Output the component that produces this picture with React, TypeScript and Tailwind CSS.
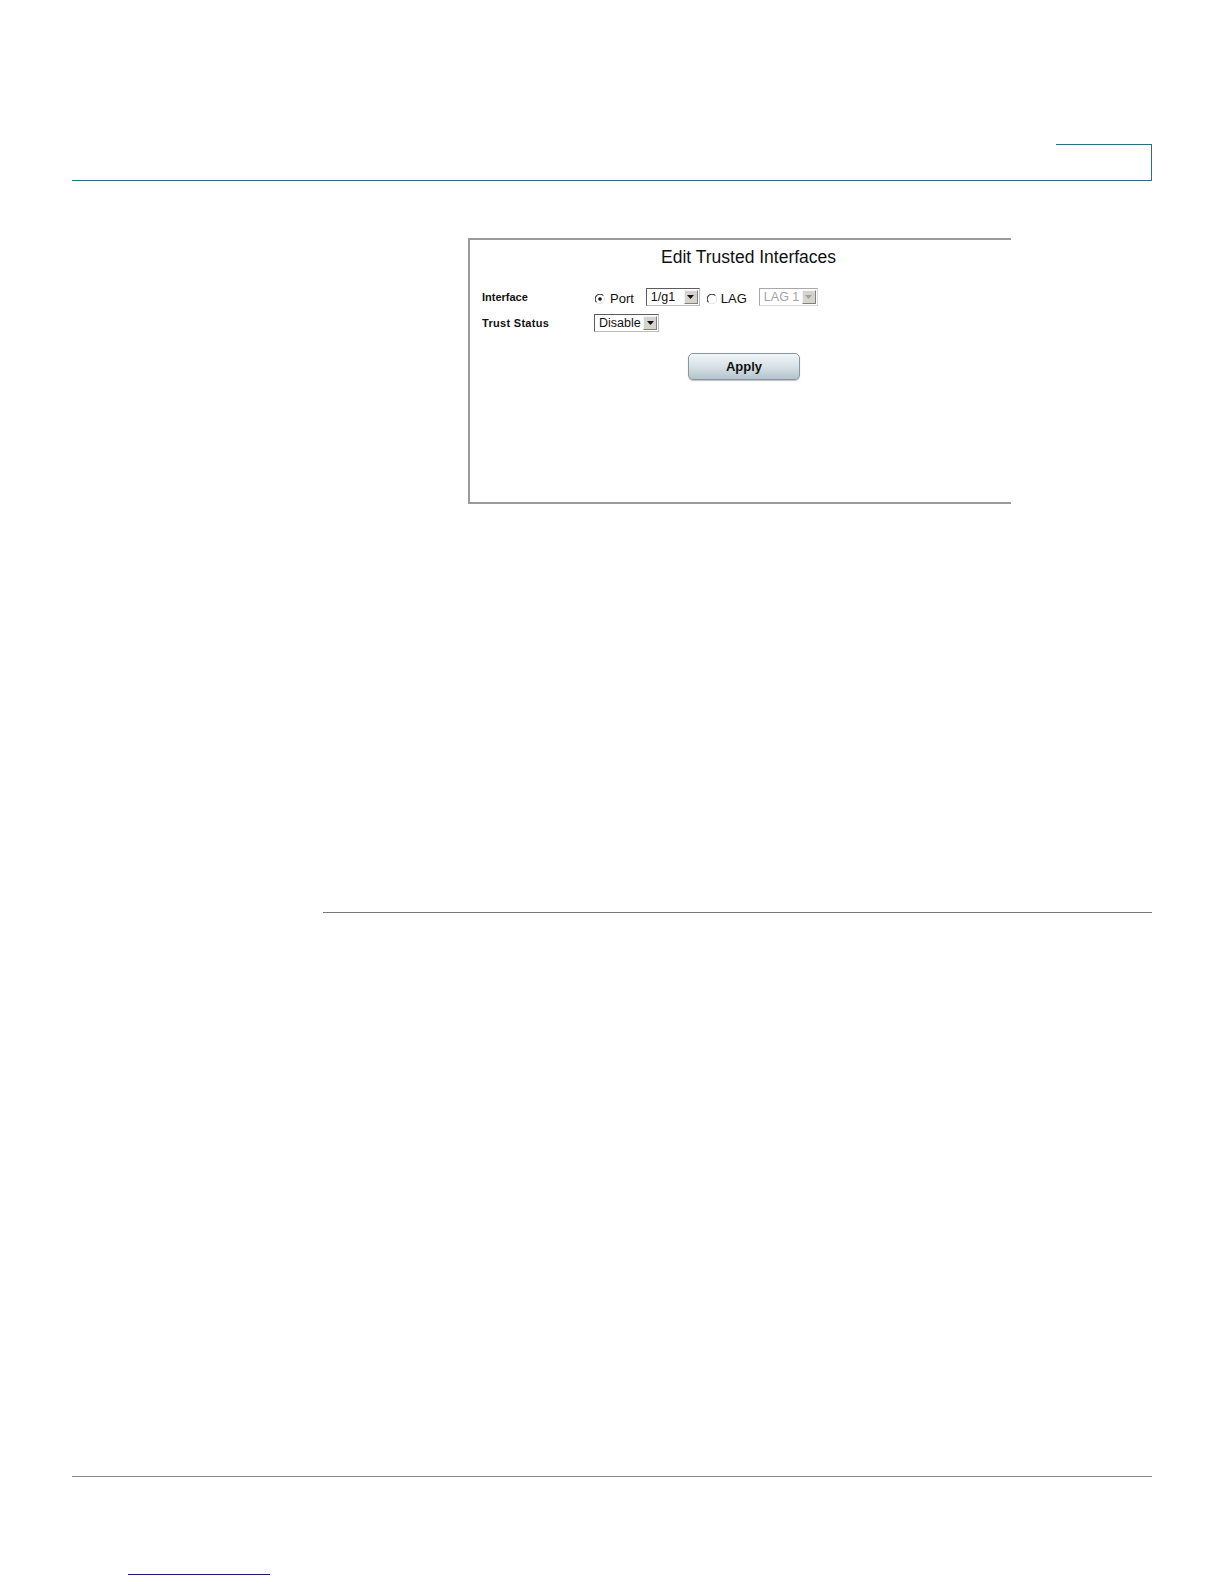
import React from "react";

const Radio: React.FC<{ checked?: boolean }> = ({ checked }) => (
  <svg width="10" height="10" viewBox="0 0 10 10" className="mt-[3px] shrink-0">
    <path d="M1.6 8.4 A4.6 4.6 0 0 1 8.4 1.6" fill="none" stroke="#3c3c3c" strokeWidth="1.1" />
    <path d="M8.4 1.6 A4.6 4.6 0 0 1 1.6 8.4" fill="none" stroke="#e2e2e2" strokeWidth="1" />
    {checked && <circle cx="5" cy="5" r="1.8" fill="#111" />}
  </svg>
);

interface SelectProps {
  value: string;
  width: string;
  disabled?: boolean;
}

const Select: React.FC<SelectProps> = ({ value, width, disabled }) => (
  <div
    className={`flex h-[18px] bg-white border ${width} ${
      disabled
        ? "border-t-[#a8a8a8] border-l-[#a8a8a8] border-b-[#d8d8d8] border-r-[#d8d8d8]"
        : "border-t-[#5c5c5c] border-l-[#5c5c5c] border-b-[#bdbdbd] border-r-[#bdbdbd]"
    }`}
  >
    <span
      className={`flex-1 pl-[4px] text-[12.5px] leading-[16px] ${
        disabled ? "text-[#a3a3a3]" : "text-[#111]"
      }`}
    >
      {value}
    </span>
    <div className="m-px w-[14px] flex items-center justify-center bg-[#d6d3cc] border border-t-[#f4f4f4] border-l-[#f4f4f4] border-b-[#808080] border-r-[#808080]">
      <svg width="7" height="4" viewBox="0 0 7 4">
        <path d="M0 0 H7 L3.5 4 Z" fill={disabled ? "#a0a0a0" : "#111"} />
      </svg>
    </div>
  </div>
);

const EditTrustedInterfaces: React.FC = () => (
  <div className="mt-[57px] ml-[468px] w-[543px] h-[266px] border-l-2 border-t-2 border-b-2 border-[#9b9b9b] pt-[7px]">
    <h1 className="pl-[191px] h-[20px] text-[17.5px] leading-[20px] text-[#111] font-normal">
      Edit Trusted Interfaces
    </h1>

    {/* Interface row */}
    <div className="mt-[21px] pl-[12px] flex items-center h-[18px]">
      <span className="w-[112px] text-[11px] font-bold text-[#111]">Interface</span>
      <div className="flex items-center">
        <div className="ml-[1px]">
          <Radio checked />
        </div>
        <span className="ml-[5px] text-[13px] leading-[16px] mt-[3px] text-[#111]">Port</span>
        <div className="ml-[12px]">
          <Select value="1/g1" width="w-[54px]" />
        </div>
        <div className="ml-[7px]">
          <Radio />
        </div>
        <span className="ml-[4px] text-[13px] leading-[16px] mt-[3px] text-[#111]">LAG</span>
        <div className="ml-[12px]">
          <Select value="LAG 1" width="w-[59px]" disabled />
        </div>
      </div>
    </div>

    {/* Trust status row */}
    <div className="mt-[8px] pl-[12px] flex items-center h-[18px]">
      <span className="w-[112px] text-[11px] font-bold tracking-[0.3px] text-[#111]">
        Trust Status
      </span>
      <Select value="Disable" width="w-[65px]" />
    </div>

    <div className="mt-[21px] ml-[218px]">
      <button className="w-[112px] h-[27px] rounded-[5px] border border-[#8597a2] bg-linear-to-b from-[#f1f5f7] via-[#d8e2e7] to-[#b3c3cc] shadow-[0_1px_1px_rgba(0,0,0,0.25)] text-[13px] font-bold text-[#111]">
        Apply
      </button>
    </div>
  </div>
);

export default function App() {
  return (
    <div className="w-[1224px] h-[1584px] bg-white overflow-hidden font-['Liberation_Sans',Arial,sans-serif]">
      <header className="pt-[144px] ml-[72px] w-[1080px]">
        <div className="flex justify-end">
          <div className="w-[96px] h-[36px] border-t border-r border-[#2f6e7c]" />
        </div>
        <div className="h-px bg-[#2f6e7c]" />
      </header>

      <EditTrustedInterfaces />

      <div className="mt-[408px] ml-[323px] w-[829px] h-px bg-[#777]" />

      <div className="mt-[563px] ml-[72px] w-[1080px] h-px bg-[#8a8a8a]" />

      <div className="mt-[97px] ml-[128px] w-[142px] h-px bg-[#1b1b6b]" />
    </div>
  );
}
